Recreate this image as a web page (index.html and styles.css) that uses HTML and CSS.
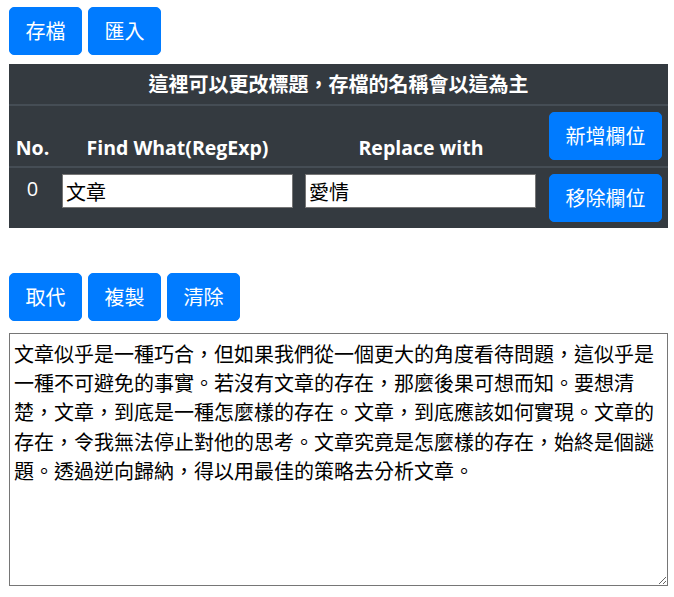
FILE: index.html
```html
<!DOCTYPE html>
<html lang="zh-Hant">
<head>
<meta charset="utf-8">
<title>Replace</title>
<link rel="stylesheet" href="styles.css">
</head>
<body>
<div class="page">
  <div class="btn-row">
    <button class="btn">存檔</button>
    <button class="btn">匯入</button>
  </div>
  <table class="rules">
    <colgroup>
      <col class="c-no">
      <col class="c-find">
      <col class="c-rep">
      <col class="c-act">
    </colgroup>
    <thead>
      <tr class="title-row">
        <th colspan="4" class="title">這裡可以更改標題，存檔的名稱會以這為主</th>
      </tr>
      <tr class="head-row">
        <th>No.</th>
        <th>Find What(RegExp)</th>
        <th>Replace with</th>
        <th><button class="btn">新增欄位</button></th>
      </tr>
    </thead>
    <tbody>
      <tr class="body-row">
        <td class="num">0</td>
        <td><input class="field" type="text" value="文章"></td>
        <td><input class="field" type="text" value="愛情"></td>
        <td><button class="btn">移除欄位</button></td>
      </tr>
    </tbody>
  </table>
  <div class="btn-row second">
    <button class="btn">取代</button>
    <button class="btn">複製</button>
    <button class="btn">清除</button>
  </div>
  <textarea class="content">文章似乎是一種巧合，但如果我們從一個更大的角度看待問題，這似乎是一種不可避免的事實。若沒有文章的存在，那麼後果可想而知。要想清楚，文章，到底是一種怎麼樣的存在。文章，到底應該如何實現。文章的存在，令我無法停止對他的思考。文章究竟是怎麼樣的存在，始終是個謎題。透過逆向歸納，得以用最佳的策略去分析文章。</textarea>
</div>
</body>
</html>
```

FILE: styles.css
```css
html, body {
  margin: 0;
  padding: 0;
  background: #fff;
  overflow: hidden;
}

body {
  font-family: "Open Sans", "Noto Sans CJK TC", sans-serif;
  font-size: 20px;
  color: #212529;
}

.page {
  width: 659px;
  margin-left: 9px;
  padding-top: 7px;
}

.btn-row {
  display: flex;
  gap: 6px;
}

.btn-row.second {
  margin-top: 45px;
}

.btn {
  display: inline-block;
  box-sizing: border-box;
  height: 48px;
  padding: 8px 15.5px;
  border: 1px solid #007bff;
  border-radius: 5px;
  background: #007bff;
  color: #fff;
  font-family: "Noto Sans CJK TC", sans-serif;
  font-size: 20px;
  font-weight: 400;
  line-height: 30px;
  cursor: pointer;
}

.rules {
  margin-top: 9px;
  width: 659px;
  table-layout: fixed;
  border-collapse: collapse;
  background: #343a40;
  color: #fff;
}

.c-no { width: 47px; }
.c-find { width: 243px; }
.c-rep { width: 244px; }
.c-act { width: 125px; }

.rules th,
.rules td {
  padding: 6px;
  text-align: center;
  line-height: 30px;
}

.title-row th {
  height: 40px;
  box-sizing: border-box;
  padding: 5px 6px;
  border-bottom: 2px solid #454d55;
  font-family: "Noto Sans CJK TC", sans-serif;
  font-weight: 700;
  font-size: 20px;
  line-height: 30px;
}

.head-row th {
  height: 60px;
  box-sizing: border-box;
  vertical-align: bottom;
  padding-bottom: 3px;
  border-bottom: 2px solid #454d55;
  font-weight: 700;
  font-size: 19.5px;
}

.head-row th .btn {
  margin-bottom: 3px;
}

.body-row td {
  height: 60px;
  box-sizing: border-box;
  vertical-align: top;
}

.num {
  font-weight: 400;
}

.field {
  display: block;
  box-sizing: border-box;
  width: 231px;
  height: 34px;
  margin: 0 auto 0 0;
  padding: 0 3px;
  border: 1px solid #767676;
  border-radius: 0;
  background: #fff;
  color: #000;
  font-family: "Noto Sans CJK TC", sans-serif;
  font-size: 20px;
}

.content {
  display: block;
  box-sizing: border-box;
  width: 659px;
  height: 253px;
  margin-top: 12px;
  padding: 5px 4px;
  border: 1px solid #767676;
  background: #fff;
  color: #000;
  font-family: "Noto Sans CJK TC", sans-serif;
  font-size: 20px;
  line-height: 29.2px;
  resize: both;
}
```
